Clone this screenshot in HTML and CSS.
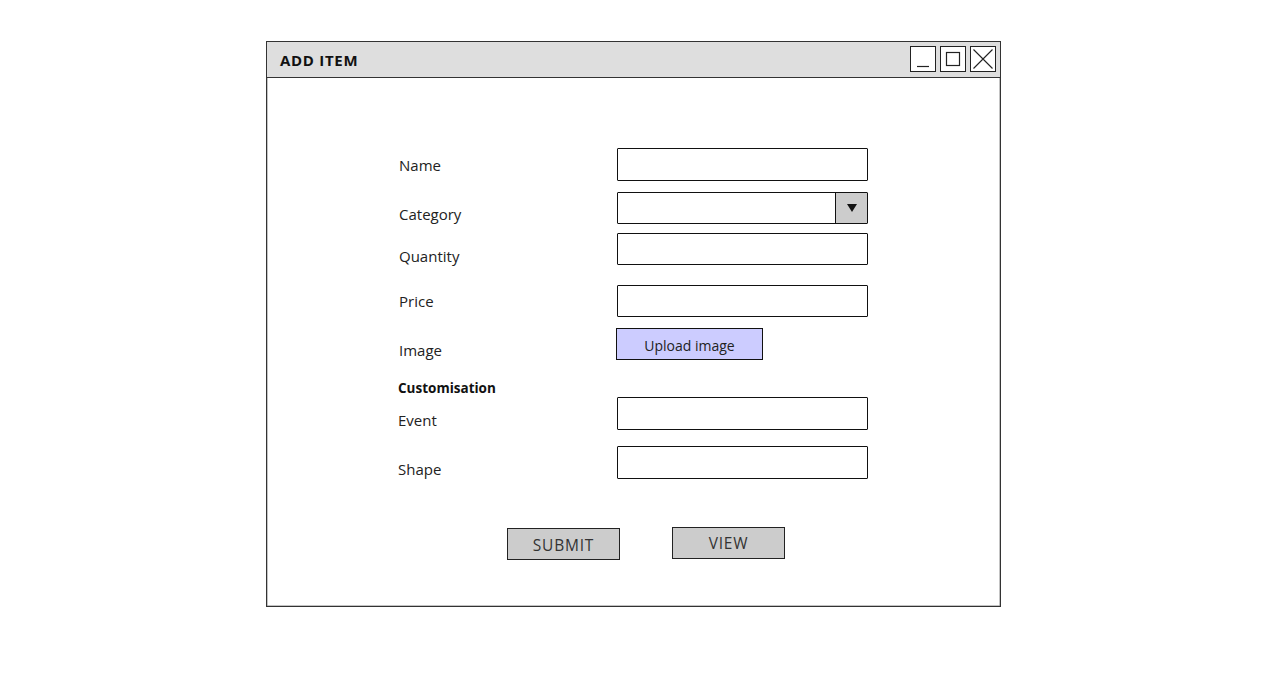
FILE: index.html
```html
<!DOCTYPE html>
<html>
<head>
<meta charset="utf-8">
<title>Add Item</title>
<link rel="stylesheet" href="styles.css">
</head>
<body>
<div class="window">
  <div class="titlebar">
    <span class="title">ADD ITEM</span>
    <div class="winbtns">
      <span class="winbtn"><svg width="24" height="24" viewBox="0 0 24 24"><path d="M6 19.5H18" stroke="#222" stroke-width="1.2"/></svg></span>
      <span class="winbtn"><svg width="24" height="24" viewBox="0 0 24 24"><rect x="5.5" y="5.5" width="13" height="13" fill="none" stroke="#222" stroke-width="1.2"/></svg></span>
      <span class="winbtn"><svg width="24" height="24" viewBox="0 0 24 24"><path d="M2.5 2.5L21.5 21.5M21.5 2.5L2.5 21.5" stroke="#222" stroke-width="1.1"/></svg></span>
    </div>
  </div>
  <div class="body">
    <div class="form">
      <div class="row r-name">
        <label class="lbl">Name</label>
        <div class="field"></div>
      </div>
      <div class="row r-cat">
        <label class="lbl">Category</label>
        <div class="field select">
          <span class="arrow"><svg width="12" height="10" viewBox="0 0 12 10"><path d="M1 1H11L6 9Z" fill="#111"/></svg></span>
        </div>
      </div>
      <div class="row r-qty">
        <label class="lbl">Quantity</label>
        <div class="field"></div>
      </div>
      <div class="row r-price">
        <label class="lbl">Price</label>
        <div class="field"></div>
      </div>
      <div class="row r-img">
        <label class="lbl">Image</label>
        <div class="upload">Upload image</div>
      </div>
      <div class="section">Customisation</div>
      <div class="row r-event">
        <label class="lbl lbl-shift">Event</label>
        <div class="field"></div>
      </div>
      <div class="row r-shape">
        <label class="lbl lbl-shift">Shape</label>
        <div class="field"></div>
      </div>
    </div>
    <div class="actions">
      <div class="btn btn-submit">SUBMIT</div>
      <div class="btn btn-view">VIEW</div>
    </div>
  </div>
</div>
</body>
</html>
```

FILE: styles.css
```css
* { box-sizing: border-box; }
html, body { margin: 0; padding: 0; background: #fff; }
body {
  font-family: "Comic Sans MS", "Open Sans", "DejaVu Sans", sans-serif;
  color: #222;
  width: 1285px;
  height: 683px;
  overflow: hidden;
}
.window {
  margin: 41px 0 0 266px;
  width: 735px;
  height: 566px;
  border: 1px solid #333;
  box-shadow: inset 0 0 0 0.5px #888;
  display: flex;
  flex-direction: column;
}
.titlebar {
  height: 36px;
  background: #dedede;
  border-bottom: 1px solid #333;
  display: flex;
  align-items: center;
  justify-content: space-between;
  padding: 0 4px 0 13px;
  flex: none;
}
.title {
  font-weight: 700;
  font-size: 15px;
  letter-spacing: 0.7px;
  color: #111;
  padding-top: 1px;
}
.winbtns { display: flex; gap: 4px; margin-top: -1px; }
.winbtn {
  width: 26px;
  height: 26px;
  border: 1px solid #222;
  background: #fff;
  display: flex;
  align-items: center;
  justify-content: center;
}
.winbtn svg { display: block; }
.body {
  flex: 1;
  padding: 70px 0 0 132px;
  display: flex;
  flex-direction: column;
}
.form { display: flex; flex-direction: column; }
.row { display: flex; align-items: flex-start; }
.lbl {
  width: 218px;
  font-size: 15px;
  line-height: 20px;
  color: #222;
}
.field {
  width: 251px;
  height: 33px;
  border: 1px solid #111;
  background: #fff;
  border-radius: 1px;
  position: relative;
}
.r-name .lbl { padding-top: 7px; }
.r-cat { margin-top: 11px; }
.r-cat .field { height: 32px; }
.r-cat .lbl { padding-top: 12px; }
.select { display: flex; justify-content: flex-end; }
.arrow {
  width: 32px;
  height: 100%;
  background: #ccc;
  border-left: 1px solid #111;
  display: flex;
  align-items: center;
  justify-content: center;
}
.r-qty { margin-top: 9px; }
.r-qty .field { height: 32px; }
.r-qty .lbl { padding-top: 13px; }
.r-price { margin-top: 19px; }
.r-price .field { height: 32px; }
.r-price .lbl { padding-top: 6px; }
.r-img { margin-top: 11px; }
.r-img .lbl { padding-top: 12px; width: 217px; }
.upload {
  width: 147px;
  height: 32px;
  border: 1px solid #111;
  background: #ccccff;
  font-size: 14px;
  display: flex;
  align-items: center;
  justify-content: center;
  padding-top: 2px;
  color: #222;
}
.section {
  margin-top: 20px;
  margin-left: -1px;
  height: 17px;
  line-height: 17px;
  font-size: 13.5px;
  font-weight: 700;
  color: #111;
}
.lbl-shift { margin-left: -1px; width: 219px; }
.r-event { margin-top: 0; }
.r-event .field { height: 33px; }
.r-event .lbl { padding-top: 13px; }
.r-shape { margin-top: 16px; }
.r-shape .field { height: 33px; }
.r-shape .lbl { padding-top: 13px; }
.actions {
  display: flex;
  align-items: flex-start;
  gap: 52px;
  margin-top: 48px;
  padding-left: 108px;
}
.btn {
  width: 113px;
  height: 32px;
  border: 1px solid #222;
  background: #cccccc;
  font-size: 15.5px;
  letter-spacing: 0.8px;
  color: #333;
  display: flex;
  align-items: center;
  justify-content: center;
}
.btn-submit { margin-top: 1px; padding-top: 2px; }
```
